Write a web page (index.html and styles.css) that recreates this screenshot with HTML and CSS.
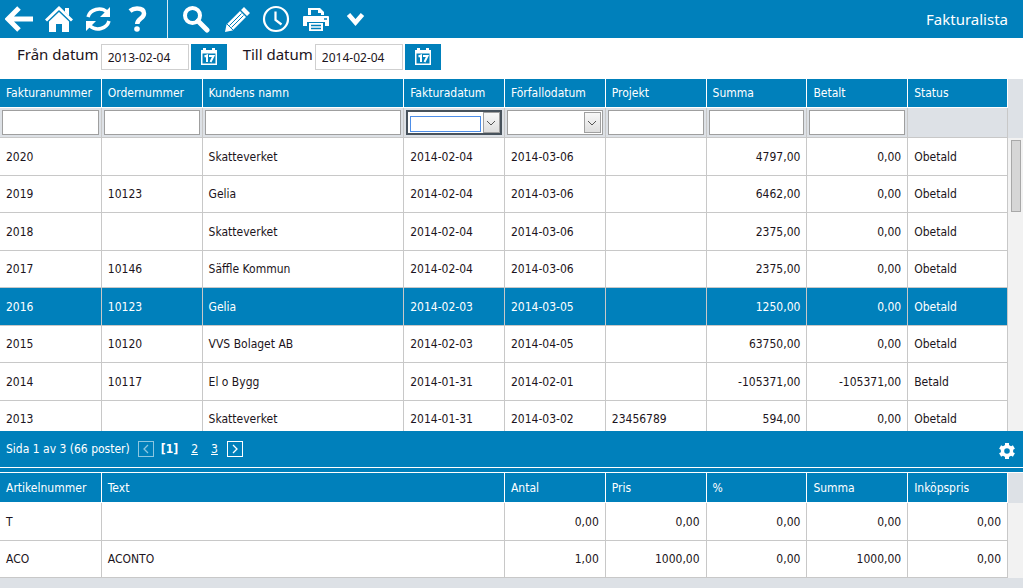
FILE: index.html
```html
<!DOCTYPE html>
<html lang="sv">
<head>
<meta charset="utf-8">
<title>Fakturalista</title>
<link rel="stylesheet" href="styles.css">
</head>
<body>
<div class="page">
  <header class="topbar">
    <nav class="tools" aria-label="Navigering">
      <button class="tool" aria-label="Tillbaka"><svg viewBox="0 0 28 28"><path d="M14 3 3 14l11 11M4 14h24" fill="none" stroke="currentColor" stroke-width="5"/></svg></button>
      <button class="tool" aria-label="Hem"><svg viewBox="0 0 28 28"><path d="M20 3h4v8l-4-4z" fill="currentColor"/><path d="M1 15.500 14 3l13 12.500" fill="none" stroke="currentColor" stroke-width="3"/><path d="M4 16.500 14 7l10 9.500V27h-7v-8h-6v8H4z" fill="currentColor"/></svg></button>
      <button class="tool" aria-label="Uppdatera"><svg viewBox="0 0 28 28"><path d="M3 12A11.500 10.500 0 0 1 22 7M24 16A11.500 10.500 0 0 1 5 21" fill="none" stroke="currentColor" stroke-width="3.500"/><path d="M25 2v10H15zM1 26V16h10z" fill="currentColor"/></svg></button>
      <button class="tool" aria-label="Hjälp"><svg viewBox="0 0 28 28"><path d="M5 6Q8 3.500 12 3.500C17 3.500 19 5.500 19 8.500c0 5-6.800 5-6.800 10.500" fill="none" stroke="currentColor" stroke-width="4.500"/><circle cx="12" cy="24" r="2.800" fill="currentColor"/></svg></button>
    </nav>
    <div class="tools tools-actions">
      <button class="tool" aria-label="Sök"><svg viewBox="0 0 28 28"><circle cx="10.500" cy="10.500" r="7.500" fill="none" stroke="currentColor" stroke-width="4"/><path d="m16 16 9 9" stroke="currentColor" stroke-width="5" stroke-linecap="round"/></svg></button>
      <button class="tool" aria-label="Redigera"><svg viewBox="0 0 28 28"><path d="M22 2l6 6-3 3-6-6zM18 6l6 6L10.500 25.500 3 27l1.500-7.500z" fill="currentColor"/><path d="m19.500 8.500-12 12M21.500 10.500l-12 12M5 19l6 6" stroke="#0080bb" stroke-width="1"/></svg></button>
      <button class="tool" aria-label="Historik"><svg viewBox="0 0 28 28"><circle cx="14" cy="14" r="12" fill="none" stroke="currentColor" stroke-width="2.200"/><path d="M13.500 6.500V15l6 4.500" fill="none" stroke="currentColor" stroke-width="2.200"/></svg></button>
      <button class="tool" aria-label="Skriv ut"><svg viewBox="0 0 28 28"><path d="M6 10V3h12l4 4v3h-3V8h-3V5H9v5zM1 12q0-1 1-1h24q1 0 1 1v9h-4v-4H5v4H1zM7 18h14v8H7z" fill="currentColor"/><path d="M9 20.500h10M9 23.500h10M22 14h3" stroke="#0080bb" stroke-width="1.300"/></svg></button>
      <button class="tool" aria-label="Mer"><svg viewBox="0 0 28 28"><path d="m6.500 9.500 7 8 7-8" fill="none" stroke="currentColor" stroke-width="4.500"/></svg></button>
    </div>
    <h1 class="title">Fakturalista</h1>
  </header>

  <form class="period">
    <label class="period-label" for="from">Från datum</label>
    <input class="period-input" id="from" type="text" value="2013-02-04">
    <button class="calendar" type="button" aria-label="Välj från datum"><svg viewBox="0 0 16 17"><path d="M0 2h2V0h3v2h6V0h3v2h2v15H0z" fill="#fff"/><path d="M1.500 5.500h13v10h-13z" fill="#0080bb"/><path d="M3.500 8.500 6 7.500V14M8 8h4.500L9.500 14" fill="none" stroke="#fff" stroke-width="2"/></svg></button>
    <label class="period-label" for="to">Till datum</label>
    <input class="period-input" id="to" type="text" value="2014-02-04">
    <button class="calendar" type="button" aria-label="Välj till datum"><svg viewBox="0 0 16 17"><path d="M0 2h2V0h3v2h6V0h3v2h2v15H0z" fill="#fff"/><path d="M1.500 5.500h13v10h-13z" fill="#0080bb"/><path d="M3.500 8.500 6 7.500V14M8 8h4.500L9.500 14" fill="none" stroke="#fff" stroke-width="2"/></svg></button>
  </form>

  <main class="master">
    <div class="grid-wrap">
      <table class="grid invoices">
        <colgroup><col class="c10"><col class="c10"><col class="c20"><col class="c10"><col class="c10"><col class="c10"><col class="c10"><col class="c10"><col class="c10"></colgroup>
        <thead>
          <tr><th>Fakturanummer</th><th>Ordernummer</th><th>Kundens namn</th><th>Fakturadatum</th><th>Förfallodatum</th><th>Projekt</th><th>Summa</th><th>Betalt</th><th>Status</th></tr>
          <tr class="filters">
            <td><input class="filter" aria-label="Filtrera fakturanummer"></td>
            <td><input class="filter" aria-label="Filtrera ordernummer"></td>
            <td><input class="filter" aria-label="Filtrera kundens namn"></td>
            <td><div class="combo combo-active"><input class="combo-input" aria-label="Filtrera fakturadatum"><button class="combo-button" aria-label="Visa kalender för fakturadatum"><svg viewBox="0 0 8 6"><path d="m0 1 4 4 4-4" fill="none" stroke="#555"/></svg></button></div></td>
            <td><div class="combo"><input class="combo-input" aria-label="Filtrera förfallodatum"><button class="combo-button" aria-label="Visa kalender för förfallodatum"><svg viewBox="0 0 8 6"><path d="m0 1 4 4 4-4" fill="none" stroke="#555"/></svg></button></div></td>
            <td><input class="filter" aria-label="Filtrera projekt"></td>
            <td><input class="filter" aria-label="Filtrera summa"></td>
            <td><input class="filter" aria-label="Filtrera betalt"></td>
            <td></td>
          </tr>
        </thead>
        <tbody>
          <tr><td>2020</td><td></td><td>Skatteverket</td><td>2014-02-04</td><td>2014-03-06</td><td></td><td class="num">4797,00</td><td class="num">0,00</td><td>Obetald</td></tr>
          <tr><td>2019</td><td>10123</td><td>Gelia</td><td>2014-02-04</td><td>2014-03-06</td><td></td><td class="num">6462,00</td><td class="num">0,00</td><td>Obetald</td></tr>
          <tr><td>2018</td><td></td><td>Skatteverket</td><td>2014-02-04</td><td>2014-03-06</td><td></td><td class="num">2375,00</td><td class="num">0,00</td><td>Obetald</td></tr>
          <tr><td>2017</td><td>10146</td><td>Säffle Kommun</td><td>2014-02-04</td><td>2014-03-06</td><td></td><td class="num">2375,00</td><td class="num">0,00</td><td>Obetald</td></tr>
          <tr class="selected"><td>2016</td><td>10123</td><td>Gelia</td><td>2014-02-03</td><td>2014-03-05</td><td></td><td class="num">1250,00</td><td class="num">0,00</td><td>Obetald</td></tr>
          <tr><td>2015</td><td>10120</td><td>VVS Bolaget AB</td><td>2014-02-03</td><td>2014-04-05</td><td></td><td class="num">63750,00</td><td class="num">0,00</td><td>Obetald</td></tr>
          <tr><td>2014</td><td>10117</td><td>El o Bygg</td><td>2014-01-31</td><td>2014-02-01</td><td></td><td class="num">-105371,00</td><td class="num">-105371,00</td><td>Betald</td></tr>
          <tr><td>2013</td><td></td><td>Skatteverket</td><td>2014-01-31</td><td>2014-03-02</td><td>23456789</td><td class="num">594,00</td><td class="num">0,00</td><td>Obetald</td></tr>
        </tbody>
      </table>
    </div>
    <div class="gutter"><div class="gutter-head gutter-head-tall"></div><div class="track"><div class="thumb"></div></div></div>
  </main>

  <footer class="pager">
    <span>Sida 1 av 3 (66 poster)</span>
    <button class="step step-off" aria-label="Föregående sida"><svg viewBox="0 0 8 10"><path d="M6 1 2 5l4 4" fill="none" stroke="currentColor" stroke-width="1.300"/></svg></button>
    <b class="current">[1]</b>
    <a class="page-link" href="#2">2</a>
    <a class="page-link" href="#3">3</a>
    <button class="step" aria-label="Nästa sida"><svg viewBox="0 0 8 10"><path d="m2 1 4 4-4 4" fill="none" stroke="currentColor" stroke-width="1.300"/></svg></button>
    <button class="gear" aria-label="Inställningar"><svg viewBox="0 0 16 16"><circle cx="8" cy="8" r="4.500" fill="none" stroke="currentColor" stroke-width="3.400"/><path d="M8 0v3M8 13v3M1.100 4l2.600 1.500M12.300 10.500l2.600 1.500M1.100 12l2.600-1.500M12.300 5.500 14.900 4" stroke="currentColor" stroke-width="4"/></svg></button>
  </footer>
  <div class="splitter"></div>

  <section class="detail">
    <div class="detail-body">
      <div class="grid-wrap">
        <table class="grid lines">
          <colgroup><col class="c10"><col class="c40"><col class="c10"><col class="c10"><col class="c10"><col class="c10"><col class="c10"></colgroup>
          <thead><tr><th>Artikelnummer</th><th>Text</th><th>Antal</th><th>Pris</th><th>%</th><th>Summa</th><th>Inköpspris</th></tr></thead>
          <tbody>
            <tr><td>T</td><td></td><td class="num">0,00</td><td class="num">0,00</td><td class="num">0,00</td><td class="num">0,00</td><td class="num">0,00</td></tr>
            <tr><td>ACO</td><td>ACONTO</td><td class="num">1,00</td><td class="num">1000,00</td><td class="num">0,00</td><td class="num">1000,00</td><td class="num">0,00</td></tr>
          </tbody>
        </table>
      </div>
      <div class="gutter"><div class="gutter-head"></div><div class="track"></div></div>
    </div>
  </section>
</div>
</body>
</html>
```
FILE: styles.css
```css
* { box-sizing: border-box; }
body {
  margin: 0;
  background: #fff;
  color: #1c1420;
  font: 12px/16px "DejaVu Sans Condensed", "Noto Sans", sans-serif;
}
button { margin: 0; padding: 0; border: 0; background: none; color: inherit; font: inherit; }
input { min-width: 0; margin: 0; padding: 0; font: inherit; outline: 0; color: inherit; }
svg { display: block; }

.page { display: flex; flex-direction: column; height: 100vh; padding-right: 1px; overflow: hidden; }

.topbar { display: flex; flex: none; align-items: center; height: 38px; background: #0080bb; color: #fff; }
.tools { display: flex; align-items: center; gap: 12px; height: 100%; padding: 0 14px 0 5px; }
.tools-actions { padding-left: 14px; border-left: 1px solid #d5eaf4; }
.tool svg { width: 28px; height: 28px; }
.title { margin: 0 15px 0 auto; font: 15px/20px "Noto Sans", "Open Sans", sans-serif; }

.period { display: flex; flex: none; align-items: center; height: 41px; padding: 0 17px 4px; font-family: "Noto Sans", "Open Sans", sans-serif; }
.period-label { padding-bottom: 6px; font-size: 15px; line-height: 20px; }
.period-input { width: 88px; height: 26px; margin: 0 2px; padding: 2px 6px 0; border: 1px solid #cfcfcf; font-size: 12px; }
.calendar { display: grid; place-items: center; width: 36px; height: 26px; margin-right: 16px; background: #0080bb; }
.calendar svg { width: 16px; height: 17px; }

.master { display: flex; flex: 1; min-height: 0; overflow: hidden; }
.grid-wrap { flex: 1; min-width: 0; }
.grid { width: 100%; table-layout: fixed; border-spacing: 0; }
.c10 { width: 10%; }
.c20 { width: 20%; }
.c40 { width: 40%; }
.grid th { height: 29px; padding: 0 6px; border-bottom: 1px solid #fff; border-left: 1px solid #fff; background: #0080bb; color: #fff; font-weight: 400; text-align: left; }
.grid td { height: 37px; padding: 0 6px; border-bottom: 1px solid #c8c8c8; border-left: 1px solid #c8c8c8; white-space: nowrap; }
.grid th:first-child, .grid td:first-child { border-left: 0; }
.grid td:last-child { border-right: 1px solid #c8c8c8; }
.grid th:last-child { border-right: 1px solid #fff; }
.invoices tbody tr:nth-child(odd) td { height: 38px; }
.lines th { height: 30px; }
.lines tbody tr:first-child td { height: 38px; }
.grid .num { text-align: right; }
.grid .selected td { background: #0080bb; color: #fff; }

.grid .filters td { height: 30px; padding: 2px; background: #dde1e6; }
.filter { display: block; width: 100%; height: 25px; border: 1px solid #9f9f9f; background: #fff; }
.combo { display: flex; gap: 2px; height: 25px; padding: 1px; border: 1px solid #9f9f9f; background: #fff; }
.combo-input { flex: 1; border: 0; }
.combo-active { border: 2px solid #47525c; padding: 0; }
.combo-active .combo-input { margin: 4px 0 1px 2px; border: 1px solid #4d8ee8; }
.combo-button { display: grid; place-items: center; width: 17px; border: 1px solid #9f9f9f; background: linear-gradient(#f8f8f8, #dedede); }
.combo-button svg { width: 8px; height: 6px; }

.gutter { display: flex; flex: none; flex-direction: column; width: 15px; }
.gutter-head { height: 30px; background: #dde1e6; }
.gutter-head-tall { height: 59px; }
.track { display: flex; flex: 1; justify-content: center; padding-top: 2px; background: #f2f2f2; }
.thumb { width: 10px; height: 72px; border: 1px solid #a8a8a8; background: #d6d6d6; }

.pager { display: flex; flex: none; align-items: center; height: 36px; padding: 0 8px 0 6px; background: #0080bb; color: #fff; }
.step { display: grid; place-items: center; width: 16px; height: 16px; border: 1px solid #fff; }
.step svg { width: 8px; height: 10px; }
.step-off { margin: 0 7px 0 8px; border-color: #8cc6e0; color: #8cc6e0; }
.page-link { margin-left: 13px; color: #fff; }
.page-link + .step { margin-left: 9px; }
.gear { margin-left: auto; padding-top: 4px; }
.gear svg { width: 16px; height: 16px; }

.splitter { flex: none; height: 6px; border: 1px solid #fff; border-width: 1px 0; background: #0080bb; }

.detail { flex: none; padding-bottom: 10px; background: #dde1e6; }
.detail-body { display: flex; background: #fff; }
```
